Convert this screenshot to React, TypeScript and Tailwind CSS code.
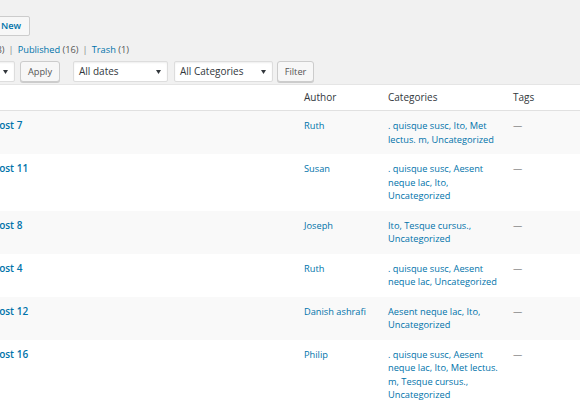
import React from "react";

type Row = { title: string; author: string; cats: string[] };

const rows: Row[] = [
  { title: "Post 7", author: "Ruth", cats: [". quisque susc, Ito, Met", "lectus. m, Uncategorized"] },
  { title: "Post 11", author: "Susan", cats: [". quisque susc, Aesent", "neque lac, Ito,", "Uncategorized"] },
  { title: "Post 8", author: "Joseph", cats: ["Ito, Tesque cursus.,", "Uncategorized"] },
  { title: "Post 4", author: "Ruth", cats: [". quisque susc, Aesent", "neque lac, Uncategorized"] },
  { title: "Post 12", author: "Danish ashrafi", cats: ["Aesent neque lac, Ito,", "Uncategorized"] },
  {
    title: "Post 16",
    author: "Philip",
    cats: [". quisque susc, Aesent", "neque lac, Ito, Met lectus.", "m, Tesque cursus.,", "Uncategorized"],
  },
];

function Arrow() {
  return (
    <svg width="5" height="4" viewBox="0 0 5 4" className="shrink-0">
      <path d="M0 0 L5 0 L2.5 4 Z" fill="#32373c" />
    </svg>
  );
}

export default function App() {
  return (
    <div className="w-[580px] h-[400px] overflow-hidden bg-[#f1f1f1] font-['Open_Sans',sans-serif] text-[#32373c]">
      {/* Add New */}
      <div className="pt-[11px] h-[31px]">
        <div className="-ml-[26px] inline-flex h-[20px] items-center rounded-[2px] border border-[#ccc] bg-[#f7f7f7] pl-[6px] pr-[8px] text-[9.25px] font-semibold text-[#0073aa]">
          Add New
        </div>
      </div>

      {/* status links */}
      <div className="mt-[12px] h-[14px] leading-[14px] text-[9.25px] whitespace-nowrap text-[#555]">
        <span className="-ml-[11.5px]">(18)</span>
        <span className="text-[#888] mx-[4px]">|</span>
        <span className="text-[#0073aa]">Published</span> <span>(16)</span>
        <span className="text-[#888] mx-[4px]">|</span>
        <span className="text-[#0073aa]">Trash</span> <span>(1)</span>
      </div>

      {/* toolbar */}
      <div className="mt-[4px] flex h-[21px] items-center text-[10px]">
        <div className="-ml-[40px] flex h-[21px] w-[55px] items-center justify-end rounded-[2px] border border-[#ddd] bg-white pr-[6px] shadow-[inset_0_1px_2px_rgba(0,0,0,0.07)]">
          <Arrow />
        </div>
        <div className="ml-[5px] flex h-[21px] w-[40px] items-center justify-center rounded-[3px] border border-[#ccc] bg-[#f7f7f7] text-[9.25px] text-[#555] shadow-[0_1px_0_#ccc]">
          Apply
        </div>
        <div className="ml-[13px] flex h-[21px] w-[95px] items-center justify-between rounded-[2px] border border-[#ddd] bg-white pl-[5px] pr-[6px] shadow-[inset_0_1px_2px_rgba(0,0,0,0.07)]">
          <span>All dates</span>
          <Arrow />
        </div>
        <div className="ml-[6px] flex h-[21px] w-[99px] items-center justify-between rounded-[2px] border border-[#ddd] bg-white pl-[5px] pr-[6px] shadow-[inset_0_1px_2px_rgba(0,0,0,0.07)]">
          <span>All Categories</span>
          <Arrow />
        </div>
        <div className="ml-[4px] flex h-[21px] w-[37px] items-center justify-center rounded-[3px] border border-[#ccc] bg-[#f7f7f7] text-[9.25px] text-[#555] shadow-[0_1px_0_#ccc]">
          Filter
        </div>
      </div>

      {/* table */}
      <div className="mt-[2px] border-t border-[#e5e5e5] bg-white">
        <div className="-ml-[15px] flex h-[26px] items-center border-b border-[#e1e1e1] text-[10px] text-[#32373c]">
          <div className="w-[311px] px-[8px]"></div>
          <div className="w-[84px] px-[8px]">Author</div>
          <div className="w-[125px] px-[8px]">Categories</div>
          <div className="flex-1 px-[8px]">Tags</div>
        </div>
        {rows.map((r, i) => (
          <div
            key={r.title}
            className={`-ml-[15px] flex pt-[8px] pb-[8px] leading-[13.5px] ${i % 2 === 0 ? "bg-[#f9f9f9]" : "bg-white"}`}
          >
            <div className="w-[311px] px-[8px] text-[10px] font-semibold text-[#0073aa]">{r.title}</div>
            <div className="w-[84px] px-[8px] text-[9.25px] text-[#0073aa] whitespace-nowrap">{r.author}</div>
            <div className="w-[125px] px-[8px] text-[9.25px] text-[#0073aa] whitespace-nowrap">
              {r.cats.map((c) => (
                <div key={c}>{c}</div>
              ))}
            </div>
            <div className="flex-1 px-[8px] text-[9.25px] text-[#555]">—</div>
          </div>
        ))}
      </div>
    </div>
  );
}
